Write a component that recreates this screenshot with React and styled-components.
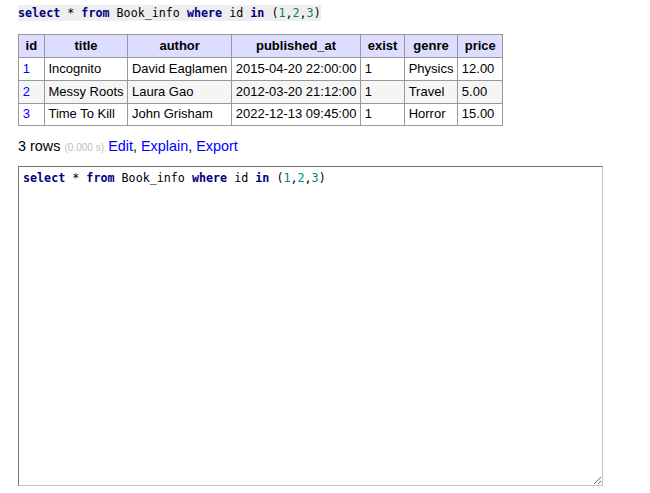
import React from "react";
import styled, { createGlobalStyle } from "styled-components";

const Global = createGlobalStyle`
  html, body { margin: 0; padding: 0; background: #fff; }
  body { font: 13px/1.25 "Liberation Sans", Arial, sans-serif; color: #000; }
`;

const Page = styled.div`
  padding: 5px 18px 0 18px;
`;

const Code = styled.code`
  display: inline-block;
  background: #eee;
  font-family: "DejaVu Sans Mono", monospace;
  font-size: 11.7px;
  line-height: 16px;
  white-space: pre;
`;

const Kw = styled.span`
  color: #000080;
  font-weight: bold;
`;
const Num = styled.span`
  color: #008080;
`;

const Table = styled.table`
  border-collapse: collapse;
  margin: 13px 0 11px 0;
  font-size: 13px;
`;

const Th = styled.th`
  background: #ddf;
  border: 1px solid #999;
  padding: 2.9px 6.6px;
  font-weight: bold;
  text-align: center;
  line-height: 16px;
`;

const Td = styled.td`
  border: 1px solid #999;
  padding: 2.9px 3.7px;
  line-height: 16px;
  text-align: left;
  white-space: nowrap;
`;

const Row = styled.tr`
  background: ${(p) => (p.$odd ? "#f5f5f5" : "#fff")};
`;

const Link = styled.a`
  color: #00f;
  text-decoration: none;
`;

const Info = styled.p`
  margin: 0 0 9px 0;
  font-size: 14.4px;
  line-height: 18px;
`;

const Time = styled.span`
  color: silver;
  font-size: 70%;
`;

const Editor = styled.div`
  box-sizing: border-box;
  width: 585px;
  height: 320px;
  border-style: solid;
  border-width: 1px;
  border-color: #767676 #c4c4c4 #c4c4c4 #767676;
  padding: 3px 4px;
  font-family: "DejaVu Sans Mono", monospace;
  font-size: 11.7px;
  line-height: 16px;
  white-space: pre;
  overflow: auto;
  resize: both;
`;

const rows = [
  ["1", "Incognito", "David Eaglamen", "2015-04-20 22:00:00", "1", "Physics", "12.00"],
  ["2", "Messy Roots", "Laura Gao", "2012-03-20 21:12:00", "1", "Travel", "5.00"],
  ["3", "Time To Kill", "John Grisham", "2022-12-13 09:45:00", "1", "Horror", "15.00"],
];

const cols = ["id", "title", "author", "published_at", "exist", "genre", "price"];

export default function App() {
  return (
    <>
      <Global />
      <Page>
        <Code>
          <Kw>select</Kw> * <Kw>from</Kw> Book_info <Kw>where</Kw> id <Kw>in</Kw> (<Num>1</Num>,<Num>2</Num>,<Num>3</Num>)
        </Code>
        <Table>
          <thead>
            <tr>
              {cols.map((c) => (
                <Th key={c}>{c}</Th>
              ))}
            </tr>
          </thead>
          <tbody>
            {rows.map((r, i) => (
              <Row key={r[0]} $odd={i % 2 === 1}>
                {r.map((v, j) => (
                  <Td key={j}>{j === 0 ? <Link href="#">{v}</Link> : v}</Td>
                ))}
              </Row>
            ))}
          </tbody>
        </Table>
        <Info>
          3 rows <Time>(0.000 s)</Time> <Link href="#">Edit</Link>, <Link href="#">Explain</Link>,{" "}
          <Link href="#">Export</Link>
        </Info>
        <Editor contentEditable suppressContentEditableWarning>
          <Kw>select</Kw> * <Kw>from</Kw> Book_info <Kw>where</Kw> id <Kw>in</Kw> (<Num>1</Num>,<Num>2</Num>,<Num>3</Num>)
        </Editor>
      </Page>
    </>
  );
}
